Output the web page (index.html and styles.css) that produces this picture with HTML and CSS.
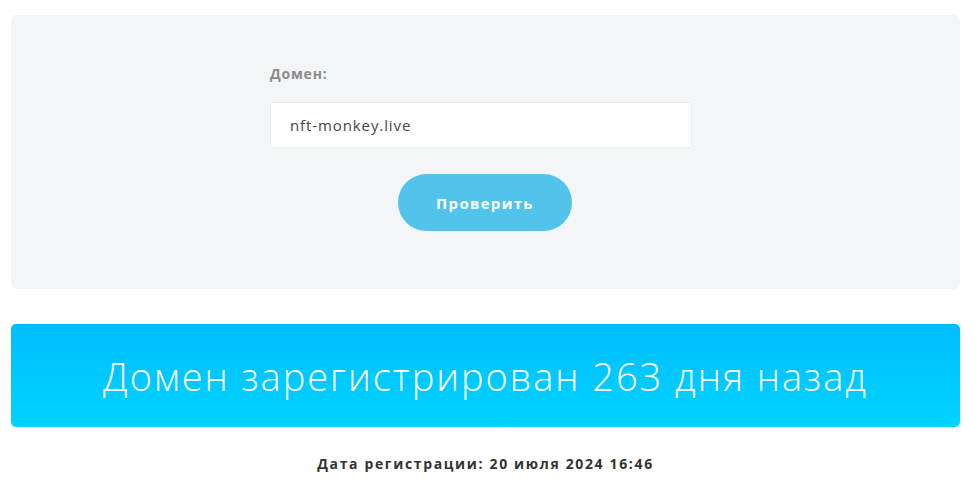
FILE: index.html
```html
<!DOCTYPE html>
<html lang="ru">
<head>
<meta charset="utf-8">
<link rel="stylesheet" href="styles.css">
</head>
<body>
<div class="page">
  <section class="panel">
    <form class="form">
      <label class="label" for="domain">Домен:</label>
      <div class="input">nft-monkey.live</div>
      <div class="actions"><button type="button" class="btn">Проверить</button></div>
    </form>
  </section>
  <div class="banner">Домен зарегистрирован 263 дня назад</div>
  <p class="date">Дата регистрации: 20 июля 2024 16:46</p>
</div>
</body>
</html>
```
FILE: styles.css
```css
html, body { margin: 0; padding: 0; background: #fff; }
body { font-family: "Open Sans", "DejaVu Sans", sans-serif; }
.page { padding: 15px 14px 0 11px; }
.panel {
  background: #f3f6f7;
  border-radius: 5px;
  height: 274px;
  box-sizing: border-box;
  padding: 49px 0 0 259px;
  display: flex;
}
.form { width: 422px; display: flex; flex-direction: column; }
.label { font-size: 14px; font-weight: 700; color: #8b8b8b; line-height: 20px; letter-spacing: 0.8px; }
.input {
  margin-top: 18px;
  height: 46px;
  box-sizing: border-box;
  background: #fff;
  border: 1px solid #ececec;
  border-radius: 2px;
  padding-left: 19px;
  display: flex;
  align-items: center;
  font-size: 15px;
  letter-spacing: 0.9px;
  color: #454545;
}
.actions { display: flex; justify-content: center; margin-top: 26px; padding-left: 8px; }
.btn {
  width: 174px; height: 57px;
  border: 0; border-radius: 29px;
  background: #52c3ea;
  color: #fff;
  font-family: inherit;
  font-size: 15px; font-weight: 700;
  letter-spacing: 1.3px;
}
.banner {
  margin-top: 35px;
  height: 103px;
  border-radius: 5px;
  background: linear-gradient(to bottom, #00bdfe, #00d3ff);
  color: #fff;
  display: flex; align-items: center; justify-content: center;
  font-size: 38px; font-weight: 300;
  letter-spacing: 1.95px;
}
.date {
  margin: 27px 0 0;
  text-align: center;
  font-size: 14px; font-weight: 700;
  letter-spacing: 1.65px;
  color: #333;
}
```
